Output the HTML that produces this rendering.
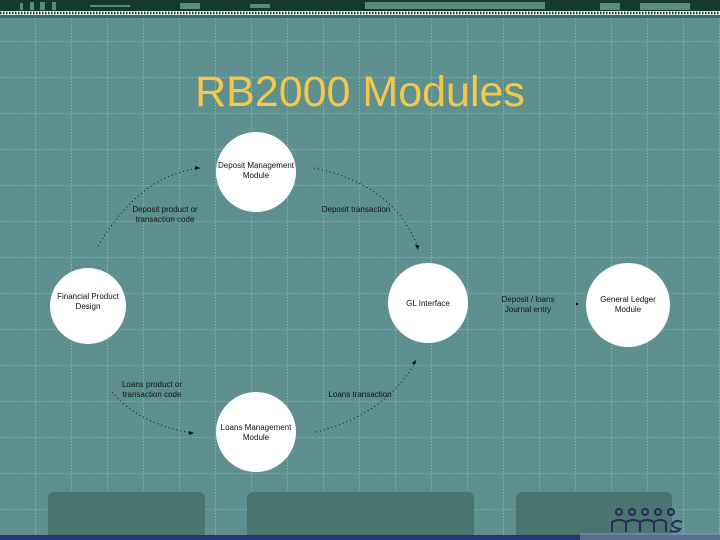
<!DOCTYPE html>
<html><head><style>
body{margin:0;width:720px;height:540px;overflow:hidden;position:relative;font-family:"Liberation Sans",sans-serif;background:#5f9090}
.t{position:absolute;font-size:8px;color:#111;text-align:center;line-height:10px}
</style></head><body>
<svg width="720" height="540" style="position:absolute;left:0;top:0">
<defs>
<pattern id="g" x="0" y="6" width="36" height="36" patternUnits="userSpaceOnUse">
<path d="M36 0V36M0 36H36" stroke="#bfe3e3" stroke-width="1" stroke-dasharray="1.5 1.5" fill="none" opacity="0.8"/>
</pattern>
</defs>
<rect width="720" height="540" fill="#5f9090"/>
<rect width="720" height="540" fill="url(#g)"/>
<rect width="720" height="11" fill="#123a2e"/>
<rect y="11" width="720" height="4" fill="#e8f0e8"/>
<path d="M0 13H720" stroke="#123a2e" stroke-width="2.5" stroke-dasharray="1.5 1.5"/>
<rect y="15" width="720" height="3" fill="#3f6a64"/>
<g fill="#6fa08a" opacity="0.8">
<rect x="20" y="3" width="3" height="7"/><rect x="30" y="2" width="4" height="8"/><rect x="40" y="2" width="5" height="8"/><rect x="52" y="2" width="4" height="8"/>
<rect x="90" y="5" width="40" height="2"/><rect x="180" y="3" width="20" height="6"/><rect x="250" y="4" width="20" height="4"/>
<rect x="365" y="2" width="180" height="7"/><rect x="600" y="3" width="20" height="7"/><rect x="640" y="3" width="50" height="7"/>
</g>
<g fill="#4a7470">
<rect x="48" y="492" width="157" height="50" rx="6"/>
<rect x="247" y="492" width="227" height="50" rx="6"/>
<rect x="516" y="492" width="156" height="50" rx="6"/>
</g>
<rect y="535" width="720" height="5" fill="#27347a"/>
<rect x="580" y="533" width="140" height="7" fill="#8090b0" opacity="0.6"/>
<g fill="#fff">
<circle cx="256" cy="172" r="40"/>
<circle cx="88" cy="306" r="38"/>
<circle cx="428" cy="303" r="40"/>
<circle cx="628" cy="305" r="42"/>
<circle cx="256" cy="432" r="40"/>
</g>
<g fill="none" stroke="#111" stroke-width="1" stroke-dasharray="1 3">
<path d="M98 246 Q140 175 200 168"/>
<path d="M314 168 Q395 185 418 248"/>
<path d="M112 392 Q140 425 193 433"/>
<path d="M316 432 Q385 415 416 361"/>
</g>
<g fill="#111">
<path d="M200 168l-5-2v4z"/><path d="M418 250l-3-5h4z"/><path d="M194 433l-5-2v4z"/><path d="M416 360l-1 5-3-2z"/><circle cx="577" cy="304" r="1.2"/>
</g>
<g fill="none" stroke="#2a2a55" stroke-width="2">
<circle cx="619" cy="512" r="3"/><circle cx="632" cy="512" r="3"/><circle cx="645" cy="512" r="3"/><circle cx="658" cy="512" r="3"/><circle cx="671" cy="512" r="3"/>
<path d="M612 532v-10q7-4 14 0v10M626 532v-10q7-4 14 0v10M640 532v-10q7-4 14 0v10M654 532v-10q7-4 12 0v10M682 522q-8-3-10 3 2 3 8 4-2 4-10 2"/>
</g>
</svg>
<div style="position:absolute;left:0;width:720px;top:71px;line-height:43px;text-align:center;font-size:43px;color:#f5c84a">RB2000 Modules</div>
<div class="t" style="left:206px;top:161px;width:100px">Deposit Management<br>Module</div>
<div class="t" style="left:115px;top:205px;width:100px">Deposit product  or<br>transaction code</div>
<div class="t" style="left:306px;top:205px;width:100px">Deposit transaction</div>
<div class="t" style="left:40px;top:292px;width:96px">Financial Product<br>Design</div>
<div class="t" style="left:378px;top:299px;width:100px">GL Interface</div>
<div class="t" style="left:478px;top:295px;width:100px">Deposit / loans<br>Journal entry</div>
<div class="t" style="left:578px;top:295px;width:100px">General Ledger<br>Module</div>
<div class="t" style="left:102px;top:380px;width:100px">Loans product  or<br>transaction code</div>
<div class="t" style="left:310px;top:390px;width:100px">Loans transaction</div>
<div class="t" style="left:206px;top:423px;width:100px">Loans Management<br>Module</div>
</body></html>
